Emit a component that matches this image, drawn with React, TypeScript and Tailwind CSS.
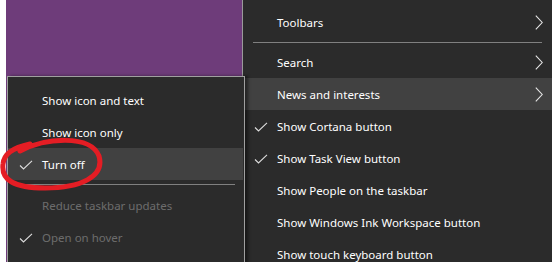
import { ReactNode } from 'react';

const font = { fontFamily: '"Noto Sans", "Liberation Sans", sans-serif' };

const Check = () => (
  <svg width="14" height="10" viewBox="0 0 14 10" className="shrink-0">
    <path d="M1 5.5 L4.5 9 L13 0.8" fill="none" stroke="#dcdcdc" strokeWidth="1.1" />
  </svg>
);

const Chevron = () => (
  <svg width="8" height="15" viewBox="0 0 8 15">
    <path d="M0.8 0.6 L7.2 7.5 L0.8 14.4" fill="none" stroke="#e6e6e6" strokeWidth="1.1" />
  </svg>
);

type RowProps = {
  label: string;
  checked?: boolean;
  sub?: boolean;
  active?: boolean;
  disabled?: boolean;
};

const Row = ({ label, checked, sub, active, disabled }: RowProps) => (
  <div className={`relative flex h-8 items-center pt-px ${active ? 'bg-[#414141]' : ''}`}>
    {checked && (
      <span className="absolute left-[11px] top-[12px]">
        <Check />
      </span>
    )}
    <span className={`pl-[34px] text-[11.5px] ${disabled ? 'text-[#6d6d6d]' : 'text-white'}`}>{label}</span>
    {sub && (
      <span className="absolute right-[9px] top-[9px]">
        <Chevron />
      </span>
    )}
  </div>
);

const Separator = ({ className }: { className: string }) => <div className={`h-px bg-[#808080] ${className}`} />;

const Menu = ({ children, className }: { children: ReactNode; className: string }) => (
  <div className={className}>{children}</div>
);

export default function App() {
  return (
    <div className="relative flex h-[262px] w-[552px] overflow-hidden bg-white" style={font}>
      <div className="flex w-[242px]">
        <div className="w-[6px] bg-white" />
        <div className="flex-1 bg-[#6e3c7a]" />
      </div>

      <Menu className="w-[310px] border-l border-[#9a9a9a] bg-[#2b2b2b] pt-[6px]">
        <Row label="Toolbars" sub />
        <Separator className="mx-[10px] mb-[3px] mt-[4px]" />
        <Row label="Search" sub />
        <Row label="News and interests" sub active />
        <Row label="Show Cortana button" checked />
        <Row label="Show Task View button" checked />
        <Row label="Show People on the taskbar" />
        <Row label="Show Windows Ink Workspace button" />
        <Row label="Show touch keyboard button" />
      </Menu>

      <div className="absolute left-[7px] top-[76px] h-[200px] w-[238px] border border-[#a0a0a0] bg-[#2b2b2b] pt-[7px] shadow-[3px_0_3px_rgba(0,0,0,0.45)]">
        <Row label="Show icon and text" />
        <Row label="Show icon only" />
        <div className="pr-px">
          <Row label="Turn off" checked active />
        </div>
        <Separator className="ml-[10px] mr-[9px] mb-[4px] mt-[4px]" />
        <Row label="Reduce taskbar updates" disabled />
        <Row label="Open on hover" checked disabled />
      </div>

      <svg className="pointer-events-none absolute left-0 top-0" width="552" height="262">
        <path
          d="M20 151 C 45 138, 90 134, 99 156 C 105 177, 80 188, 45 188 C 14 188, 1 180, 3 164 C 4 154, 12 148, 30 144"
          fill="none"
          stroke="#e41d24"
          strokeWidth="5"
          strokeLinecap="round"
        />
      </svg>
    </div>
  );
}
